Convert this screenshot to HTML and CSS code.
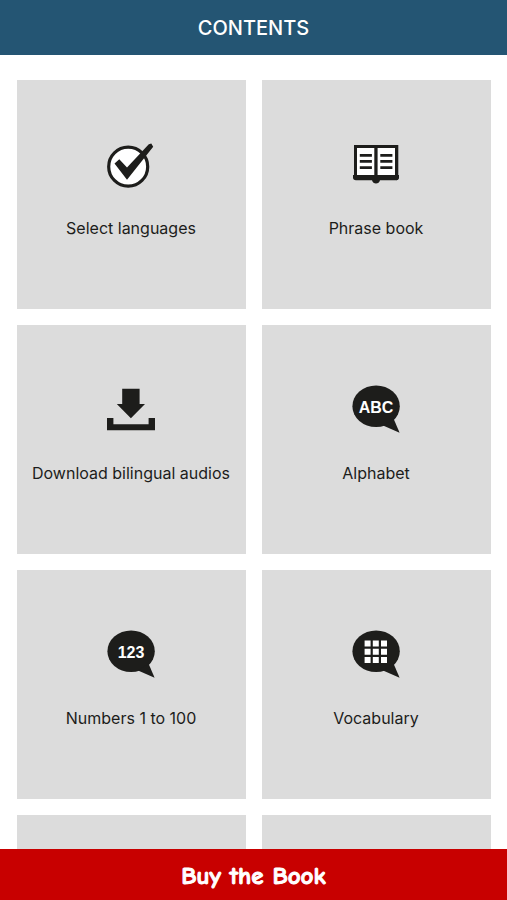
FILE: index.html
```html
<!DOCTYPE html>
<html lang="en">
<head>
<meta charset="utf-8">
<meta name="viewport" content="width=device-width, initial-scale=1">
<title>Contents</title>
<link rel="stylesheet" href="styles.css">
</head>
<body>
<header class="top-bar"><h1 class="title">CONTENTS</h1></header>
<main class="content">
  <nav class="tiles">
    <a class="tile" href="#languages">
      <svg class="icon" viewBox="0 0 48 48" aria-hidden="true">
        <circle cx="21.2" cy="26.7" r="19.5" fill="#fff" stroke="#1d1d1b" stroke-width="3.2"/>
        <path d="M7.5 23.5 12.3 19.2 20 27.4 41.8 4.2 44.3 3.4 46.2 6.8 20 39.8Z"/>
      </svg>
      <span>Select languages</span>
    </a>
    <a class="tile" href="#phrases">
      <svg class="icon" viewBox="0 0 48 48" aria-hidden="true">
        <path d="M2 5H46.3V38.3Q46.3 40.3 44.3 40.3H28Q27 43.6 24 43.6T20 40.3H4Q1 40.3 1 37.5V35H2Z"/>
        <path d="M46 35H47V37.5Q47 40.3 44 40.3Z"/>
        <path fill="#fff" d="M5 8H22.3V35H5ZM25.6 8H43V35H25.6Z"/>
        <path d="M7.8 14h12.1v2.7H7.8ZM7.8 20.1h12.1v2.7H7.8ZM7.8 26.2h12.1v2.7H7.8ZM28.3 14h12.1v2.7H28.3ZM28.3 20.1h12.1v2.7H28.3ZM28.3 26.2h12.1v2.7H28.3Z"/>
      </svg>
      <span>Phrase book</span>
    </a>
    <a class="tile" href="#download">
      <svg class="icon" viewBox="0 0 48 48" aria-hidden="true">
        <path d="M15.2 3.7H32.6V19H38L23.9 33.3 9.8 19H15.2ZM0 33H6.4V39.3H41.6V33H48V45.3H0Z"/>
      </svg>
      <span>Download bilingual audios</span>
    </a>
    <a class="tile" href="#alphabet">
      <svg class="icon" viewBox="0 0 48 48" aria-hidden="true">
        <ellipse cx="24.1" cy="21.2" rx="23.7" ry="20.8"/>
        <path d="M31 40.5 47.6 47.8 41.5 33.5Z"/>
        <text class="glyph" x="24" y="28">ABC</text>
      </svg>
      <span>Alphabet</span>
    </a>
    <a class="tile" href="#numbers">
      <svg class="icon" viewBox="0 0 48 48" aria-hidden="true">
        <ellipse cx="24.1" cy="21.2" rx="23.7" ry="20.8"/>
        <path d="M31 40.5 47.6 47.8 41.5 33.5Z"/>
        <text class="glyph" x="24" y="28">123</text>
      </svg>
      <span>Numbers 1 to 100</span>
    </a>
    <a class="tile" href="#vocabulary">
      <svg class="icon" viewBox="0 0 48 48" aria-hidden="true">
        <ellipse cx="24.1" cy="21.2" rx="23.7" ry="20.8"/>
        <path d="M31 40.5 47.6 47.8 41.5 33.5Z"/>
        <path fill="#fff" d="M12.6 10.6h6v6h-6ZM20.8 10.6h6v6h-6ZM29 10.6h6v6h-6ZM12.6 18.8h6v6h-6ZM20.8 18.8h6v6h-6ZM29 18.8h6v6h-6ZM12.6 27h6v6h-6ZM20.8 27h6v6h-6ZM29 27h6v6h-6Z"/>
      </svg>
      <span>Vocabulary</span>
    </a>
    <div class="tile"></div>
    <div class="tile"></div>
  </nav>
</main>
<button class="buy" type="button">Buy the Book</button>
</body>
</html>
```
FILE: styles.css
```css
* {
  box-sizing: border-box;
}

body {
  margin: 0;
  height: 100vh;
  display: flex;
  flex-direction: column;
  background: #fff;
  color: #1d1d1b;
  font-family: Inter, "Liberation Sans", sans-serif;
}

.top-bar {
  flex: none;
  padding: 15px 16px 14px;
  background: #245573;
  color: #fff;
  text-align: center;
}

.title {
  margin: 0;
  font-size: 20px;
  line-height: 26px;
  font-weight: 500;
}

.content {
  flex: 1;
  min-height: 0;
  overflow-y: auto;
  scrollbar-width: none;
  padding: 25px 16px 16px 17px;
}

.tiles {
  display: grid;
  grid-template-columns: 1fr 1fr;
  gap: 16px;
}

.tile {
  aspect-ratio: 1;
  padding: 60px 1px 0 0;
  display: flex;
  flex-direction: column;
  align-items: center;
  gap: 30px;
  background: #dcdcdc;
  color: inherit;
  font-size: 16px;
  line-height: 20px;
  text-align: center;
  text-decoration: none;
}

.icon {
  flex: none;
  width: 48px;
  height: 48px;
  fill: #1d1d1b;
}

.glyph {
  fill: #fff;
  font: bold 16px "Liberation Sans", sans-serif;
  text-anchor: middle;
}

.buy {
  flex: none;
  padding: 12px 16px 9px;
  border: 0;
  background: #c80000;
  color: #fff;
  font-family: "Comic Neue", Lato, sans-serif;
  font-size: 25px;
  font-weight: 700;
  line-height: 30px;
  -webkit-text-stroke: 1px #fff;
}
```
